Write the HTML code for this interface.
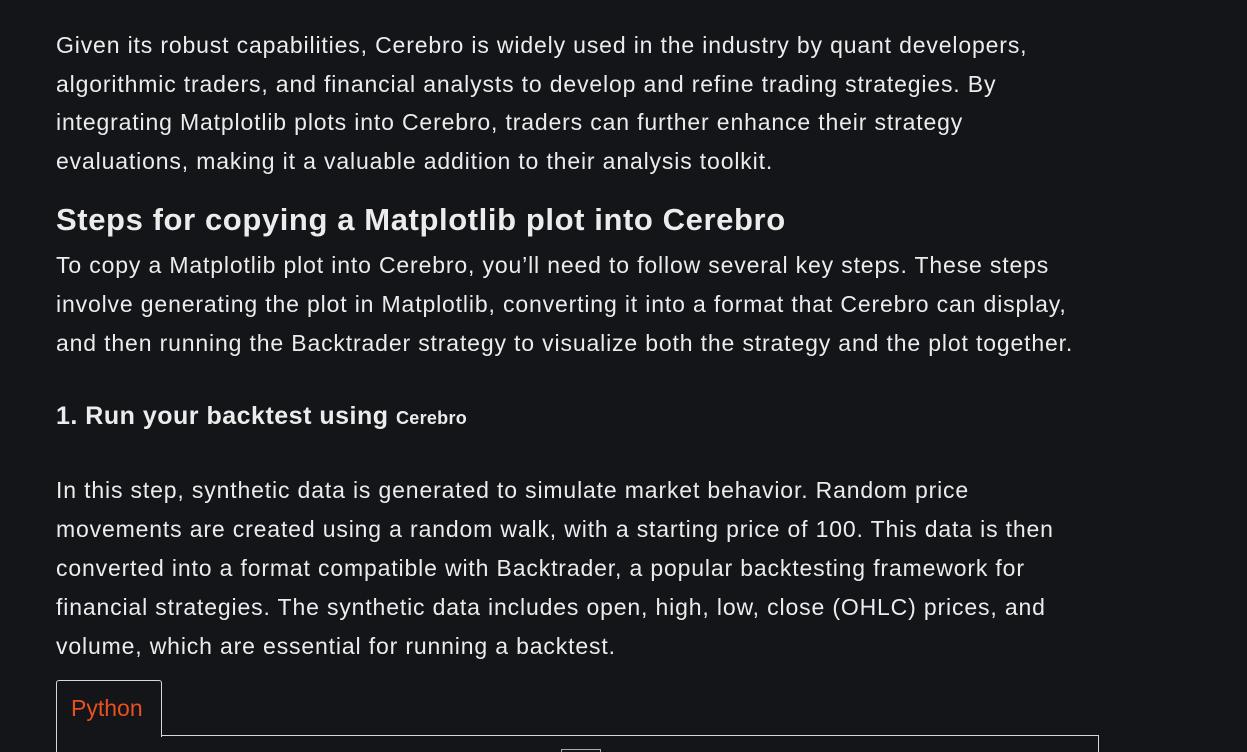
<!DOCTYPE html>
<html><head><meta charset="utf-8"><style>
html,body{margin:0;padding:0;background:#141519;width:1247px;height:752px;overflow:hidden}
body{font-family:"Liberation Sans",sans-serif;color:#ececec;position:relative}
.l{position:absolute;left:56px;white-space:nowrap;font-size:23px;letter-spacing:0.85px;line-height:26px}
.h2{position:absolute;left:56px;font-size:31px;font-weight:bold;white-space:nowrap;line-height:36px;letter-spacing:0.6px}
.h3{position:absolute;left:56px;font-size:25px;font-weight:bold;white-space:nowrap;line-height:30px;letter-spacing:0.5px}
code{font-family:"Liberation Sans",sans-serif;font-weight:bold;font-size:18px;letter-spacing:0.3px}
.tab{position:absolute;left:56px;top:680px;width:104px;height:56px;border:1px solid #d8d8d8;border-bottom:none;border-radius:3px 3px 0 0;background:#141519;z-index:2}
.tab span{position:absolute;left:14px;top:14px;color:#e8501e;font-size:23px}
.panel{position:absolute;left:56px;top:735px;width:1041px;height:40px;border:1px solid #d8d8d8;border-bottom:none}
.sq{position:absolute;left:561px;top:749px;width:38px;height:10px;border:1px solid #aaa}
</style></head><body>
<div class="l" style="top:32px">Given its robust capabilities, Cerebro is widely used in the industry by quant developers,</div>
<div class="l" style="top:71px">algorithmic traders, and financial analysts to develop and refine trading strategies. By</div>
<div class="l" style="top:109px">integrating Matplotlib plots into Cerebro, traders can further enhance their strategy</div>
<div class="l" style="top:148px">evaluations, making it a valuable addition to their analysis toolkit.</div>
<div class="h2" style="top:202px">Steps for copying a Matplotlib plot into Cerebro</div>
<div class="l" style="top:252px">To copy a Matplotlib plot into Cerebro, you’ll need to follow several key steps. These steps</div>
<div class="l" style="top:291px">involve generating the plot in Matplotlib, converting it into a format that Cerebro can display,</div>
<div class="l" style="top:330px">and then running the Backtrader strategy to visualize both the strategy and the plot together.</div>
<div class="h3" style="top:401px">1. Run your backtest using <code>Cerebro</code></div>
<div class="l" style="top:477px">In this step, synthetic data is generated to simulate market behavior. Random price</div>
<div class="l" style="top:516px">movements are created using a random walk, with a starting price of 100. This data is then</div>
<div class="l" style="top:555px">converted into a format compatible with Backtrader, a popular backtesting framework for</div>
<div class="l" style="top:594px">financial strategies. The synthetic data includes open, high, low, close (OHLC) prices, and</div>
<div class="l" style="top:633px">volume, which are essential for running a backtest.</div>
<div class="panel"></div>
<div class="tab"><span>Python</span></div>
<div class="sq"></div>
</body></html>
